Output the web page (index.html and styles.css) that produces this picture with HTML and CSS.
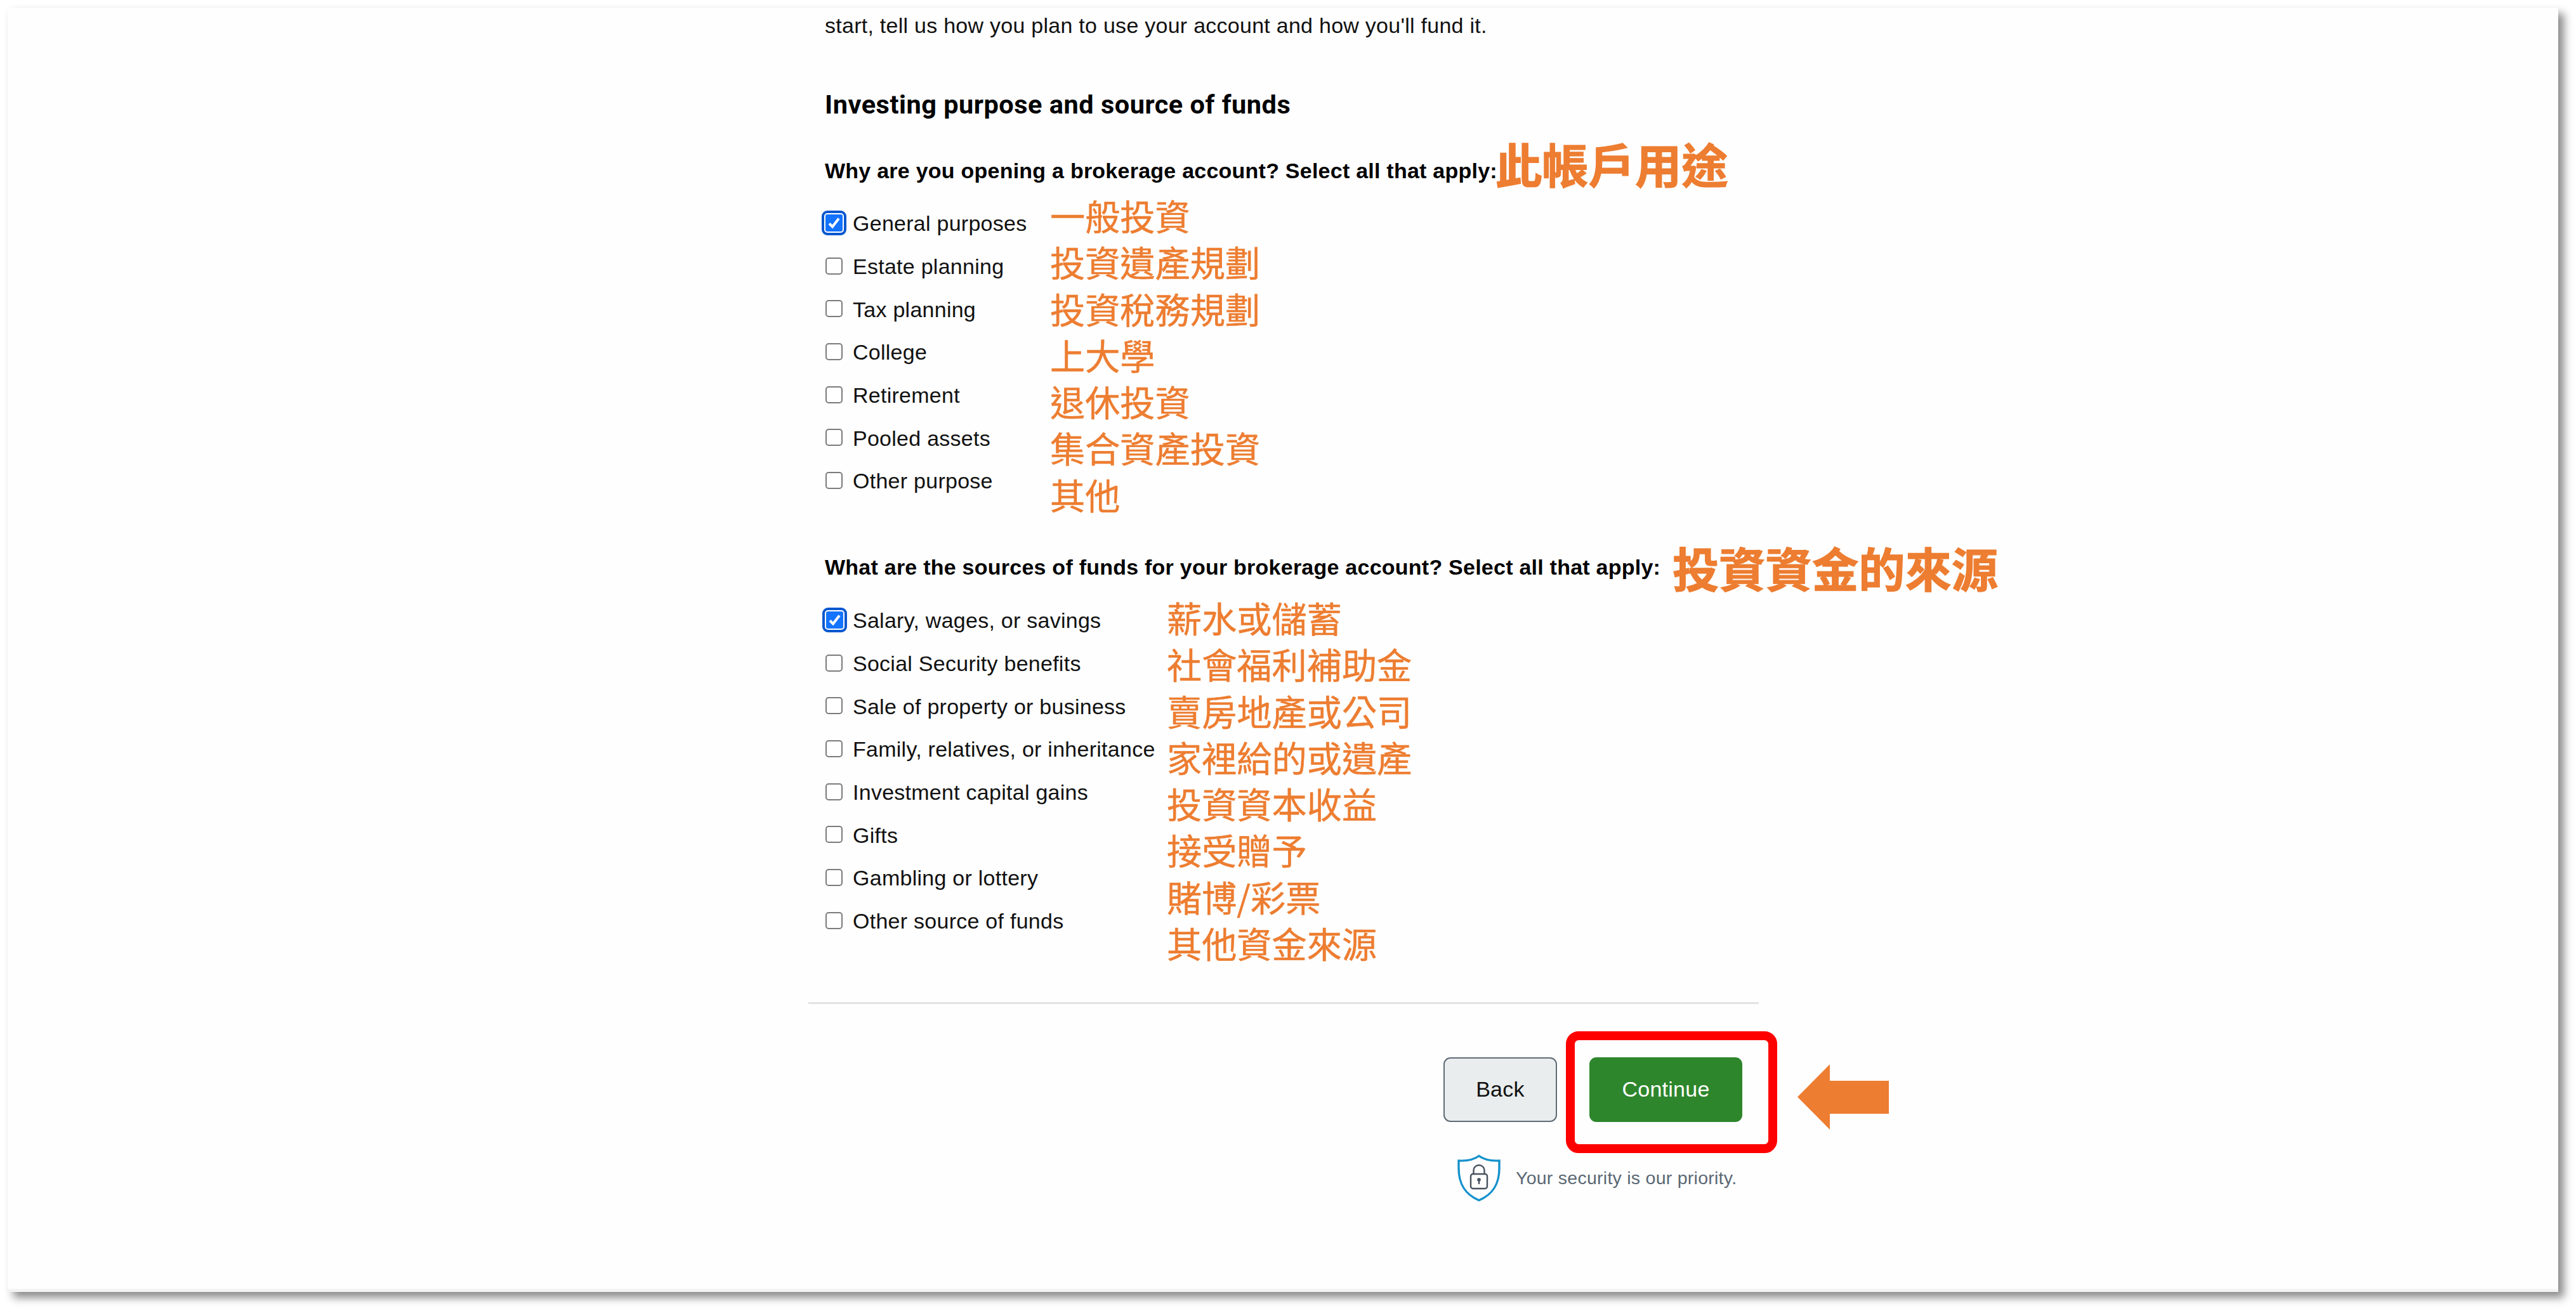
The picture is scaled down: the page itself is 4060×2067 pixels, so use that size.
FILE: index.html
```
<!DOCTYPE html>
<html lang="en">
  <head>
    <meta charset="UTF-8" />
    <meta name="viewport" content="width=device-width, initial-scale=1.0" />
    <title>Investing purpose and source of funds</title>
    <link rel="stylesheet" href="styles.css" />
  </head>
  <body>
    <main class="page">
      <p class="intro">start, tell us how you plan to use your account and how you'll fund it.</p>
      <h1>Investing purpose and source of funds</h1>

      <div class="question">
        <h2>Why are you opening a brokerage account? Select all that apply:</h2>
        <span class="title-note raised" lang="zh-Hant">此帳戶用途</span>
      </div>
      <div class="group purposes">
        <div class="options">
          <label><input type="checkbox" checked />General purposes</label>
          <label><input type="checkbox" />Estate planning</label>
          <label><input type="checkbox" />Tax planning</label>
          <label><input type="checkbox" />College</label>
          <label><input type="checkbox" />Retirement</label>
          <label><input type="checkbox" />Pooled assets</label>
          <label><input type="checkbox" />Other purpose</label>
        </div>
        <div class="notes" lang="zh-Hant">
          <span>一般投資</span>
          <span>投資遺產規劃</span>
          <span>投資稅務規劃</span>
          <span>上大學</span>
          <span>退休投資</span>
          <span>集合資產投資</span>
          <span>其他</span>
        </div>
      </div>

      <div class="question">
        <h2 class="wide">What are the sources of funds for your brokerage account? Select all that apply:</h2>
        <span class="title-note" lang="zh-Hant">投資資金的來源</span>
      </div>
      <div class="group sources">
        <div class="options">
          <label><input type="checkbox" checked />Salary, wages, or savings</label>
          <label><input type="checkbox" />Social Security benefits</label>
          <label><input type="checkbox" />Sale of property or business</label>
          <label><input type="checkbox" />Family, relatives, or inheritance</label>
          <label><input type="checkbox" />Investment capital gains</label>
          <label><input type="checkbox" />Gifts</label>
          <label><input type="checkbox" />Gambling or lottery</label>
          <label><input type="checkbox" />Other source of funds</label>
        </div>
        <div class="notes" lang="zh-Hant">
          <span>薪水或儲蓄</span>
          <span>社會福利補助金</span>
          <span>賣房地產或公司</span>
          <span>家裡給的或遺產</span>
          <span>投資資本收益</span>
          <span>接受贈予</span>
          <span>賭博/彩票</span>
          <span>其他資金來源</span>
        </div>
      </div>

      <div class="divider"></div>

      <div class="actions">
        <button class="back">Back</button>
        <div class="continue-wrap">
          <button class="continue">Continue</button>
          <div class="highlight"></div>
        </div>
        <svg class="arrow" width="144" height="103" viewBox="0 0 144 103">
          <path d="M0 51.5 L51 0 V26 H144 V78 H51 V103 Z" fill="#ed7d31" />
        </svg>
      </div>

      <div class="security">
        <svg width="68" height="75" viewBox="0 0 68 75" fill="none">
          <path d="M34 2.5 C26 8.5 14 10.5 2 10 V22 C2 47 12 63 34 72.5 C56 63 66 47 66 22 V10 C54 10.5 42 8.5 34 2.5 Z" stroke="#1592cc" stroke-width="3.4" />
          <g stroke="#47525e" stroke-width="2.4">
            <rect x="21" y="31" width="26" height="23" rx="3.5" />
            <path d="M25.5 31 V26 C25.5 14 42.5 14 42.5 26 V31" />
            <path d="M34 41 V47" />
          </g>
          <circle cx="34" cy="40" r="2.8" fill="#47525e" />
        </svg>
        <span>Your security is our priority.</span>
      </div>
    </main>
  </body>
</html>
```
FILE: styles.css
```
* {
  box-sizing: border-box;
}

body {
  margin: 0;
  height: 2067px;
  padding: 12px 0 0 12px;
  background-color: #fff;
  font-family: "Liberation Sans", Arial, sans-serif;
  font-size: 34px;
  letter-spacing: 0.26px;
  color: #111;
}

.page {
  width: 4020px;
  height: 2025px;
  padding-left: 1288px;
  background-color: #fefefe;
  border-bottom: 5px solid #f3f3f3;
  box-shadow: 0 0 3px rgba(0, 0, 0, 0.03), 9px 9px 13px rgba(0, 0, 0, 0.46);
}

.intro {
  margin: 0;
  line-height: 56px;
}

h1 {
  margin: 67px 0 40px;
  font-family: Roboto, sans-serif;
  font-size: 41.5px;
  font-weight: 700;
  letter-spacing: 0.5px;
  line-height: 60px;
  color: #000;
}

.question {
  display: flex;
  align-items: center;
  height: 68px;
  white-space: nowrap;
}

h2 {
  width: 1057px;
  margin: 0;
  font-size: 34px;
  letter-spacing: 0.24px;
  line-height: 68px;
  color: #000;
}

h2.wide {
  width: 1336px;
}

.title-note,
.notes {
  font-family: "Noto Sans CJK TC", sans-serif;
  letter-spacing: 0;
  color: #ed7d31;
}

.title-note {
  font-size: 73.3px;
  font-weight: 700;
  line-height: 68px;
  -webkit-text-stroke: 1.2px #ed7d31;
}

.raised {
  padding-bottom: 24px;
}

.group {
  display: flex;
  align-items: flex-start;
  white-space: nowrap;
}

.purposes {
  height: 557px;
}

.sources {
  height: 652px;
}

.options {
  width: 355px;
  padding-top: 16px;
}

.sources .options {
  width: 539px;
  padding-top: 17px;
}

.options label {
  display: flex;
  align-items: center;
  height: 67.7px;
}

input {
  appearance: none;
  width: 27px;
  height: 27px;
  margin: 0 16px 3px 1px;
  border: 2px solid #7b7b7b;
  border-radius: 5px;
  background-color: #fff;
}

input:checked {
  border: none;
  border-radius: 3px;
  background: #1473ff url("data:image/svg+xml,%3Csvg xmlns='http://www.w3.org/2000/svg' viewBox='0 0 27 27'%3E%3Cpath d='M6 14.5 L11 19.5 L21 6.5' fill='none' stroke='white' stroke-width='4'/%3E%3C/svg%3E");
  outline: 4px solid #0a58d0;
  outline-offset: 2px;
}

.sources input:checked {
  margin: 0 15px 2px 2px;
}

.notes {
  display: flex;
  flex-direction: column;
  font-size: 55.2px;
  line-height: 73.3px;
  -webkit-text-stroke: 0.5px #ed7d31;
}

.sources .notes {
  padding-top: 9px;
}

.divider {
  width: 1498px;
  height: 3px;
  margin-left: -26px;
  background-color: #e1e3e3;
}

.actions {
  display: flex;
  align-items: center;
  height: 102px;
  margin: 84px 0 0 975px;
}

button {
  height: 102px;
  padding: 0 0 2px;
  border: 2px solid #5f6b76;
  border-radius: 11px;
  font-family: inherit;
  font-size: 34px;
  letter-spacing: inherit;
}

.back {
  width: 179px;
  background-color: #e9eded;
  color: #111;
}

.continue {
  width: 241px;
  border-color: #2e862c;
  background-color: #2e862c;
  color: #fff;
}

.continue-wrap {
  position: relative;
  margin-left: 51px;
}

/* marker box around the Continue button */
.highlight {
  position: absolute;
  top: -41px;
  right: -55px;
  bottom: -49px;
  left: -37px;
  border: 14px solid #f00;
  border-radius: 20px;
}

.arrow {
  margin: 23px 0 0 87px;
}

.security {
  display: flex;
  align-items: center;
  margin: 51px 0 0 997px;
  gap: 24px;
  font-size: 28.5px;
  color: #5b6874;
}
```
